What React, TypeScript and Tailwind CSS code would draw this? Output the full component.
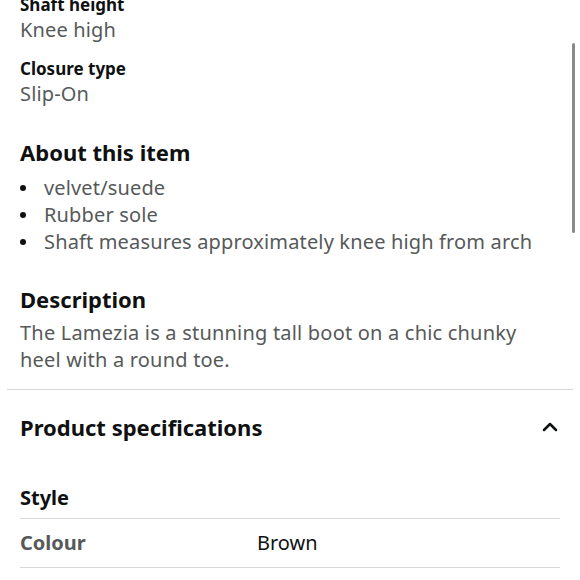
import { ChevronUp } from "lucide-react";

const bullets = [
  "velvet/suede",
  "Rubber sole",
  "Shaft measures approximately knee high from arch",
];

function Attr({ label, value }: { label: string; value: string }) {
  return (
    <div className="mb-[14px]">
      <div className="text-[17px] leading-[22px] font-bold text-[#0f1111]">{label}</div>
      <div className="text-[20px] leading-[28px] tracking-[0.15px] text-[#565959]">{value}</div>
    </div>
  );
}

export default function App() {
  return (
    <div className="relative h-[580px] w-[580px] overflow-hidden bg-white font-['Noto_Sans',sans-serif] text-[#0f1111]">
      <div className="-mt-[6px] px-5">
        <Attr label="Shaft height" value="Knee high" />
        <Attr label="Closure type" value="Slip-On" />

        <h2 className="mt-[30px] text-[22px] leading-[28px] font-bold">About this item</h2>
        <ul className="mt-[8px] text-[20px] leading-[27px] tracking-[0.15px] text-[#565959]">
          {bullets.map((b) => (
            <li key={b} className="flex items-center">
              <span className="mr-[18px] h-[6px] w-[6px] shrink-0 rounded-full bg-[#0f1111]" />
              <span>{b}</span>
            </li>
          ))}
        </ul>

        <h2 className="mt-[30px] text-[22px] leading-[28px] font-bold">Description</h2>
        <p className="mt-[6px] pr-10 text-[20px] leading-[27px] tracking-[0.2px] text-[#565959]">
          The Lamezia is a stunning tall boot on a chic chunky heel with a round toe.
        </p>
      </div>

      <div className="mx-[7px] mt-[16px] border-t border-[#d5d9d9]" />

      <div className="px-5">
        <div className="flex items-center justify-between pt-[22px]">
          <h2 className="text-[22px] leading-[30px] font-bold">Product specifications</h2>
          <ChevronUp className="mr-[-2px] h-6 w-6 text-[#0f1111]" strokeWidth={2.5} />
        </div>

        <div className="mt-[42px] pb-[6px] text-[20px] leading-[28px] font-bold">Style</div>
        <div className="border-t border-[#d5d9d9]" />
        <div className="flex py-[10px] text-[20px] leading-[28px]">
          <div className="w-[237px] font-bold text-[#565959]">Colour</div>
          <div>Brown</div>
        </div>
        <div className="border-t border-[#d5d9d9]" />
      </div>

      <div className="absolute right-[5px] top-[43px] h-[190px] w-[3px] rounded-full bg-[#8a8a8a]" />
    </div>
  );
}
